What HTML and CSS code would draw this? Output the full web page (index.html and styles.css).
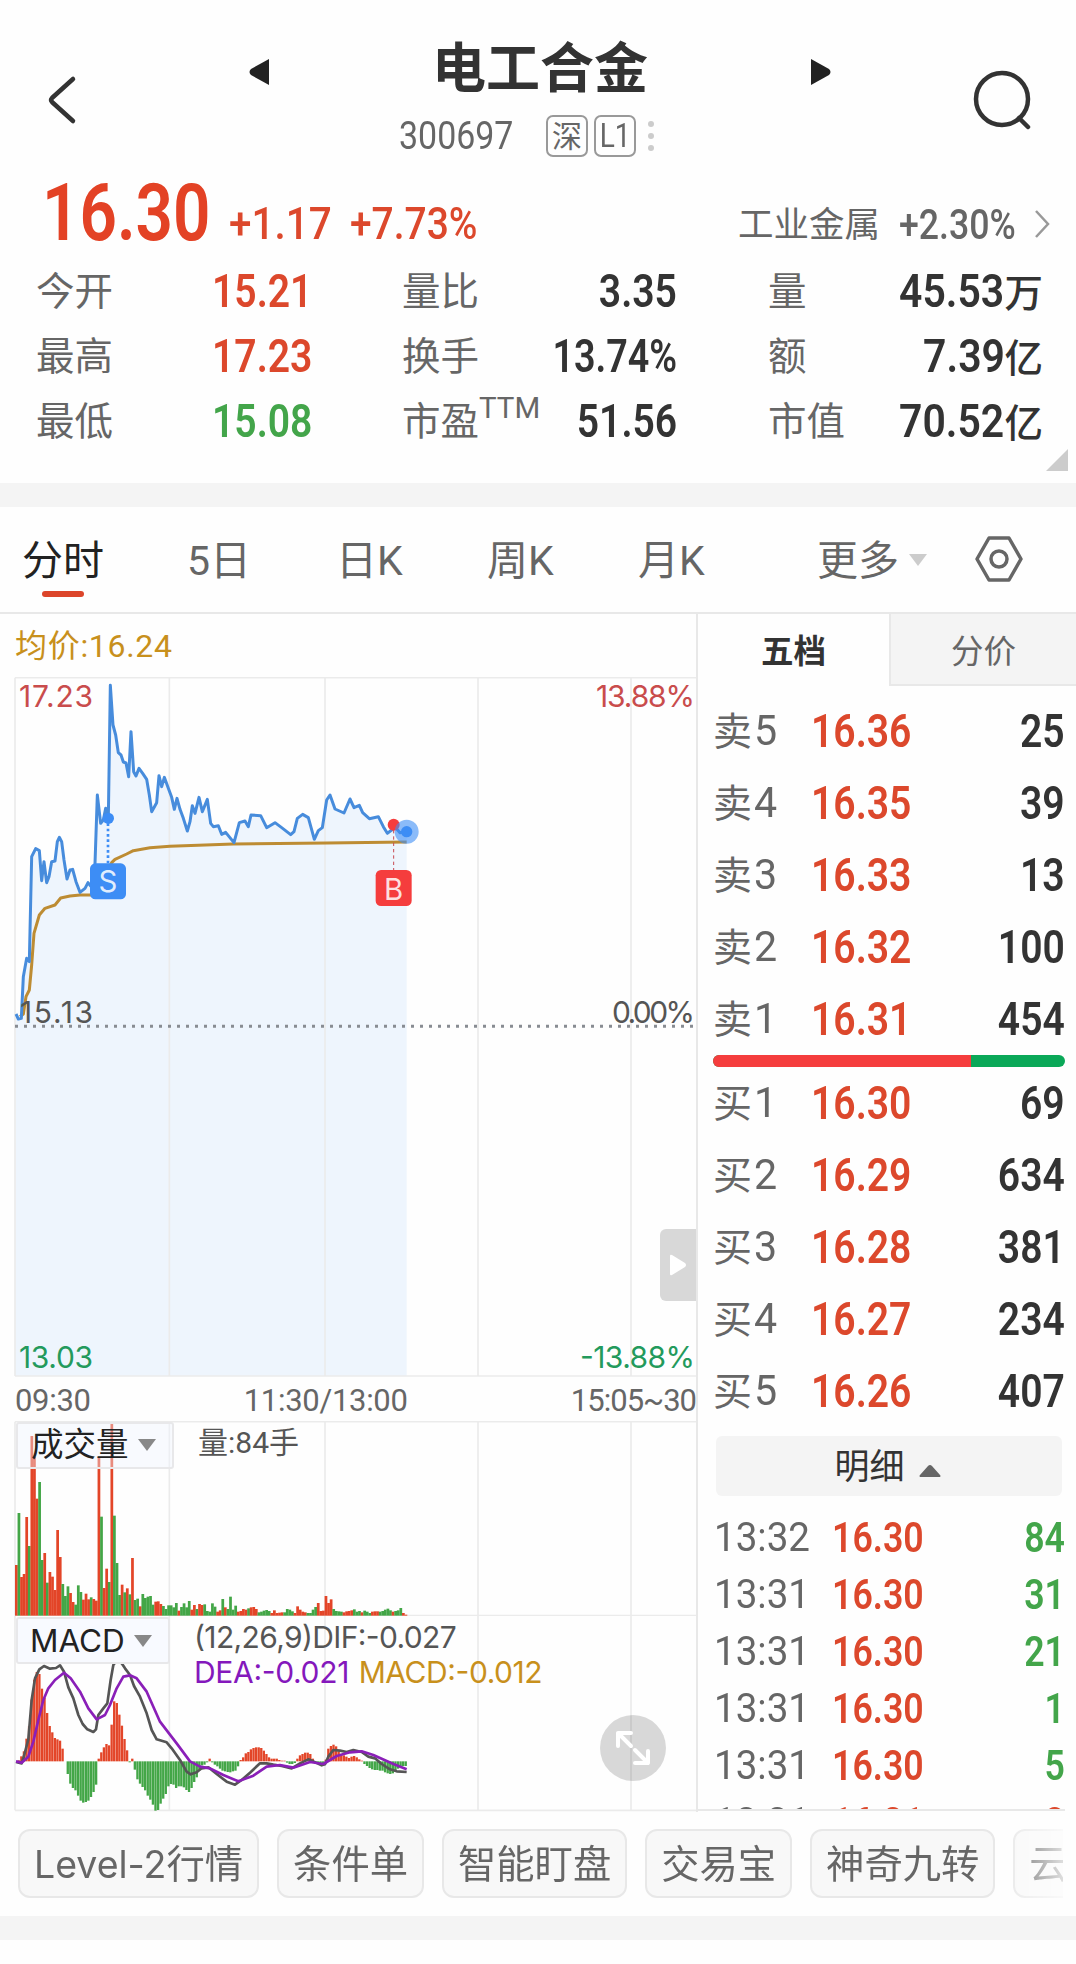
FILE: index.html
```html
<!DOCTYPE html>
<html lang="zh-CN">
<head>
    <meta charset="UTF-8">
    <meta name="viewport" content="width=device-width, initial-scale=1.0">
    <title>电工合金 300697</title>
    <link rel="stylesheet" href="styles.css">
</head>
<body>
    <header class="header">
        <svg class="back" viewBox="0 0 32 52" width="32" height="52"><path d="M27 5 L6 24 Q4 26 6 28 L27 47" /></svg>
        <svg class="prev" viewBox="0 0 22 28" width="22" height="28"><path d="M21 1 V27 L3 17 Q0 14 3 11 Z" /></svg>
        <div class="title">
            <h1>电工合金</h1>
            <div class="code">
                <span class="num code-num">300697</span>
                <span class="tag">深</span>
                <span class="tag"><span class="num">L1</span></span>
                <span class="dots"><i></i><i></i><i></i></span>
            </div>
        </div>
        <svg class="next" viewBox="0 0 22 28" width="22" height="28"><path d="M1 1 V27 L19 17 Q22 14 19 11 Z" /></svg>
        <svg class="search" viewBox="0 0 60 62" width="60" height="62"><circle cx="29" cy="30" r="26" /><path d="M46 49 L55 58" /></svg>
    </header>

    <section class="quote">
        <div class="price-row">
            <span class="num price">16.30</span>
            <span class="num change">+1.17</span>
            <span class="num change percent">+7.73%</span>
            <span class="sector">工业金属</span>
            <span class="num sector-change">+2.30%</span>
            <svg class="more" viewBox="0 0 18 30" width="18" height="30"><path d="M3 2 L15 15 L3 28" /></svg>
        </div>
        <div class="stats">
            <div class="stat"><span>今开</span><b class="num up">15.21</b></div>
            <div class="stat"><span>量比</span><b class="num">3.35</b></div>
            <div class="stat"><span>量</span><b><b class="num">45.53</b>万</b></div>
            <div class="stat"><span>最高</span><b class="num up">17.23</b></div>
            <div class="stat"><span>换手</span><b class="num pct">13.74%</b></div>
            <div class="stat"><span>额</span><b><b class="num">7.39</b>亿</b></div>
            <div class="stat"><span>最低</span><b class="num down">15.08</b></div>
            <div class="stat"><span>市盈<sup>TTM</sup></span><b class="num">51.56</b></div>
            <div class="stat"><span>市值</span><b><b class="num">70.52</b>亿</b></div>
        </div>
        <div class="corner"></div>
    </section>

    <nav class="tabs">
        <span class="tab active">分时</span>
        <span class="tab tab-5d">5日</span>
        <span class="tab tab-day">日K</span>
        <span class="tab tab-week">周K</span>
        <span class="tab tab-month">月K</span>
        <span class="tab tab-more">更多<i class="caret"></i></span>
        <svg class="settings" viewBox="0 0 48 46" width="48" height="46"><path d="M14 2 H34 L46 23 L34 44 H14 L2 23 Z" /><circle cx="24" cy="23" r="8" /></svg>
    </nav>

    <main class="main">
        <section class="charts">
            <div class="avg">均价:16.24</div>

            <div class="plot">
                <svg viewBox="0 51 2088 2100" width="696" height="700">
                    <path class="area" id="area" />
                    <path class="grid" d="M45 53 H2088 M45 2148 H2088 M45 53 V2148 M508 53 V2148 M975 53 V2148 M1434 53 V2148 M1893 53 V2148" />
                    <path class="zero" d="M45 1099 H2088" />
                    <polyline class="avg-line" points="60,1070 70,1062 78,1010 88,990 95,915 102,820 118,765 135,745 165,735 182,714 210,708 240,705 272,705 320,640 335,608 345,598 380,582 400,572 450,563 510,559 700,552 980,549 1220,546" />
                    <polyline class="price-line" id="priceLine" points="48,1062 55,1077 64,1075 70,950 80,895 88,905 95,590 107,566 118,572 125,662 132,605 140,668 147,650 155,605 165,603 172,545 178,532 185,545 192,600 201,657 210,630 218,628 228,665 240,697 255,685 264,668 272,678 284,640 292,405 302,490 310,480 317,445 325,475 331,76 339,195 347,225 355,278 363,285 370,306 378,309 386,350 393,215 401,335 408,348 417,325 428,340 440,358 448,405 455,455 470,428 477,347 485,380 493,352 505,385 515,412 523,448 531,415 540,448 550,475 562,513 570,485 577,437 585,460 597,412 607,455 622,418 632,490 640,500 655,497 665,523 677,517 702,548 718,488 735,483 745,500 753,465 782,467 800,503 825,488 845,503 872,524 882,515 892,475 908,463 925,473 943,538 955,512 967,503 980,420 990,405 1005,447 1032,459 1050,417 1062,443 1078,436 1088,458 1108,476 1135,470 1150,500 1162,520 1175,510 1180,495 1200,518 1220,515" />

                    <!-- sell / buy markers -->
                    <path class="sell-stem" d="M324 490 V612" />
                    <circle class="sell" cx="325" cy="475" r="17" />
                    <rect class="sell" x="270" y="610" width="108" height="108" rx="16" />
                    <text class="mark" x="324" y="697">S</text>
                    <path class="buy-stem" d="M1181 510 V630" />
                    <circle class="buy" cx="1181" cy="494" r="18" />
                    <rect class="buy" x="1127" y="630" width="108" height="108" rx="16" />
                    <text class="mark" x="1181" y="719">B</text>
                    <circle class="halo" cx="1220" cy="515" r="36" />
                    <circle class="sell" cx="1220" cy="515" r="17" />

                    <text class="label high" x="57" y="140" textLength="222">17.23</text>
                    <text class="label high" x="1788" y="140" textLength="297">13.88%</text>
                    <text class="label" x="60" y="1088" textLength="219">15.13</text>
                    <text class="label" x="1836" y="1088" textLength="249">0.00%</text>
                    <text class="label low" x="57" y="2124" textLength="222">13.03</text>
                    <text class="label low" x="1740" y="2124" textLength="345">-13.88%</text>
                </svg>
                <div class="expand-side"><svg viewBox="0 0 18 22" width="18" height="22"><path d="M1 2 Q1 0 3 1 L16 9 Q18 11 16 13 L3 21 Q1 22 1 20 Z" /></svg></div>
            </div>

            <div class="times"><span>09:30</span><span class="noon">11:30/13:00</span><span class="close">15:05~30</span></div>

            <div class="plot">
                <svg viewBox="0 63 2088 585" width="696" height="195">
                    <path class="grid" d="M45 65 H2088 M45 647 H2088 M45 65 V647 M508 65 V647 M975 65 V647 M1434 65 V647 M1893 65 V647" />
                    <g id="volume"></g>
                </svg>
                <div class="chip chip-volume">成交量<i class="caret"></i></div>
                <div class="legend">量:84手</div>
            </div>

            <div class="plot">
                <svg viewBox="0 48 2088 588" width="696" height="196">
                    <path class="grid" d="M45 631 H2088 M45 48 V631 M508 48 V631 M975 48 V631 M1434 48 V631 M1893 48 V631" />
                    <g id="macd"></g>
                    <polyline class="dif" points="48,486 65,490 72,468 85,418 95,300 105,235 118,208 132,198 150,206 168,204 180,196 192,215 205,262 220,295 235,345 248,372 262,388 280,396 288,388 295,345 310,325 322,310 332,240 340,195 350,182 365,190 375,205 390,225 402,258 420,290 440,340 455,390 470,418 500,427 515,445 540,480 560,515 572,523 590,517 605,505 625,502 650,522 680,545 705,554 725,540 750,518 780,490 800,490 820,494 845,498 875,505 900,490 925,478 940,484 965,496 975,493 985,470 1000,450 1020,452 1040,456 1060,450 1085,456 1105,470 1125,475 1145,492 1170,508 1190,514 1220,516" />
                    <polyline class="dea" points="48,484 65,488 85,470 100,425 115,360 130,300 145,265 165,240 192,218 212,235 240,275 265,325 290,358 315,345 330,315 350,265 370,230 390,226 410,235 440,275 480,365 530,430 570,484 600,500 630,505 670,525 715,544 760,527 800,500 840,495 880,503 930,486 970,492 1010,468 1050,457 1085,454 1120,465 1180,492 1220,508" />
                    <text class="label" x="582" y="144" textLength="788">(12,26,9)DIF:-0.027</text>
                    <text class="label purple" x="582" y="248" textLength="466">DEA:-0.021</text>
                    <text class="label gold" x="1076" y="248" textLength="552">MACD:-0.012</text>
                </svg>
                <div class="chip chip-macd">MACD<i class="caret"></i></div>
                <div class="fullscreen"><svg viewBox="0 0 66 66" width="66" height="66"><path d="M31 31 L18 18 M18 31 V18 H31 M35 35 L48 48 M48 36 V48 H35" /></svg></div>
            </div>
        </section>

        <aside class="book">
            <div class="book-tabs"><span class="on">五档</span><span class="off">分价</span></div>
            <div class="levels" id="sells"></div>
            <div class="ratio"><i></i></div>
            <div class="levels" id="buys"></div>
            <div class="detail">明细<svg viewBox="0 0 22 12" width="22" height="12"><path d="M1 12 Q0 11 1 10 L9 1 Q11 -1 13 1 L21 10 Q22 11 21 12 Z" /></svg></div>
            <div class="ticks" id="ticks"></div>
        </aside>
    </main>

    <div class="tools">
        <span class="tool"><span class="latin">Level-2</span>行情</span>
        <span class="tool">条件单</span>
        <span class="tool">智能盯盘</span>
        <span class="tool">交易宝</span>
        <span class="tool">神奇九转</span>
        <span class="tool">云参数</span>
    </div>
    <div class="band"></div>

    <script>
        // Order book, [label, level, price, amount]
        const sells = [
            ['卖', 5, '16.36', 25], ['卖', 4, '16.35', 39], ['卖', 3, '16.33', 13],
            ['卖', 2, '16.32', 100], ['卖', 1, '16.31', 454]
        ];
        const buys = [
            ['买', 1, '16.30', 69], ['买', 2, '16.29', 634], ['买', 3, '16.28', 381],
            ['买', 4, '16.27', 234], ['买', 5, '16.26', 407]
        ];
        // Latest trades
        const ticks = [
            ['13:32', '16.30', 84, 'down'], ['13:31', '16.30', 31, 'down'], ['13:31', '16.30', 21, 'down'],
            ['13:31', '16.30', 1, 'down'], ['13:31', '16.30', 5, 'down'], ['13:31', '16.31', 8, 'up']
        ];

        function levelRow(row) {
            return `<div class="level"><span class="side">${row[0]}<span class="num">${row[1]}</span></span>` +
                `<b class="num up">${row[2]}</b><b class="num amount">${row[3]}</b></div>`;
        }
        document.getElementById('sells').innerHTML = sells.map(levelRow).join('');
        document.getElementById('buys').innerHTML = buys.map(levelRow).join('');
        document.getElementById('ticks').innerHTML = ticks.map(t =>
            `<div class="tick"><span class="num">${t[0]}</span><b class="num up">${t[1]}</b><b class="num amount ${t[3]}">${t[2]}</b></div>`
        ).join('');

        // Shade everything under the price line
        const line = document.getElementById('priceLine').getAttribute('points');
        document.getElementById('area').setAttribute('d', `M45 2148 L${line} L1220 2148 Z`);

        const step = 7.74;
        function bar(i, y, h, cls, w) {
            return `<rect class="${cls}" x="${(45 + i * step).toFixed(1)}" y="${y}" width="${w}" height="${h}"/>`;
        }

        // Volume per minute, r = up, g = down
        const volume = ('r152 g308 r116 r125 r296 g209 r539 r477 r351 g401 g167 r188 g99 r131 r117 r77 r257 r176 g95 g59 ' +
            'g88 r68 r41 g33 g91 g71 r48 r66 r49 g55 r50 r45 r476 g297 r83 r141 g101 r578 g300 g158 ' +
            'g62 r93 g70 r82 g64 r173 g47 g51 r28 g65 g53 g57 g59 g33 r42 r43 r35 g29 g20 g31 ' +
            'g31 g25 g38 r15 g26 g37 g25 g44 r18 r32 g20 r35 r32 g34 g14 g12 g37 g27 r12 r16 ' +
            'g50 r25 g20 g57 g18 g30 r12 r14 r20 r18 g22 r25 r26 r20 g10 g12 g15 g17 g14 r8 ' +
            'r16 r8 r9 r10 g10 g20 g18 g13 r8 r28 r18 r12 r10 g8 g8 g18 g26 r38 r14 r15 ' +
            'r59 r38 r49 g20 g14 g13 g12 r10 r13 r14 r16 g19 g12 g14 r10 g15 g12 g8 r12 r13 ' +
            'r13 g12 g14 g18 g21 g16 r12 g14 g16 g23 r8 r3').split(' ');
        document.getElementById('volume').innerHTML = volume.map((v, i) => {
            const h = Number(v.slice(1));
            return bar(i, 647 - h, h, v[0] === 'r' ? 'bar-up' : 'bar-down', 8.2);
        }).join('');

        const macd = [0, 3, 15, 30, 68, 105, 185, 245, 268, 262, 218, 190, 145, 106, 87, 70, 66, 62, 38, 0,
            -38, -67, -80, -87, -103, -118, -124, -122, -118, -107, -92, -70, 8, 27, 42, 52, 48, 110, 180, 175,
            140, 107, 67, 33, -3, 8, -25, -54, -67, -77, -87, -103, -115, -130, -148, -146, -127, -112, -98, -75,
            -68, -70, -80, -75, -75, -78, -86, -92, -80, -62, -48, -25, -12, -10, -3, 8, -3, -10, -15, -22,
            -28, -30, -32, -33, -30, -28, -15, 4, 12, 24, 28, 36, 40, 42, 42, 40, 32, 22, 12, 8,
            8, 8, 4, 2, 2, -4, -8, -8, -5, 8, 18, 22, 26, 26, 22, 8, -2, -6, -10, -6,
            5, 38, 46, 50, 45, 30, 20, 18, 14, 10, 14, 16, 12, 6, 2, -8, -14, -20, -24, -26,
            -26, -28, -28, -33, -36, -38, -36, -30, -22, -18, -14, -14];
        document.getElementById('macd').innerHTML = macd.map((v, i) =>
            bar(i, v > 0 ? 484 - v : 484, Math.abs(v), v > 0 ? 'bar-up' : 'bar-down', 7)
        ).join('');
    </script>
</body>
</html>
```
FILE: styles.css
```css
* {
    box-sizing: border-box;
}
body {
    margin: 0;
    width: 1076px;
    height: 1964px;
    overflow: hidden;
    background-color: #fefefe;
    color: #333;
    font-family: Roboto, "Noto Sans CJK SC", sans-serif;
}
svg {
    display: block;
}
/* Narrow figures */
.num {
    display: inline-block;
    font-family: Roboto, sans-serif;
    transform: scaleX(.85);
    transform-origin: right center;
    white-space: nowrap;
}
.up {
    color: #dc482c;
}
.down {
    color: #43a54a;
}

/* Header */
.header {
    display: flex;
    height: 166px;
    padding-top: 36px;
}
.header svg {
    flex: none;
    fill: none;
    stroke: #333;
    stroke-width: 4.5;
    stroke-linecap: round;
}
.header .back {
    margin: 38px 0 0 46px;
}
.header .prev,
.header .next {
    fill: #222;
    stroke: none;
    margin-top: 22px;
}
.header .prev {
    margin-left: 170px;
}
.header .search {
    margin: 33px 0 0 141px;
}
.title {
    width: 540px;
}
.title h1 {
    margin: 0;
    padding-top: 3px;
    text-align: center;
    font-size: 54px;
    line-height: 62px;
    font-weight: 700;
}
.code {
    display: flex;
    align-items: center;
    height: 42px;
    margin-top: 14px;
    padding-left: 129px;
    color: #666;
}
.code-num {
    width: 147px;
    font-size: 39px;
    transform: scaleX(.87);
    transform-origin: left center;
}
.tag {
    width: 42px;
    height: 42px;
    margin-right: 6px;
    border: 2px solid #999;
    border-radius: 7px;
    text-align: center;
    font-size: 30px;
    line-height: 39px;
}
.tag .num {
    font-size: 33px;
    line-height: 37px;
    transform-origin: center;
}
.dots {
    display: flex;
    flex-direction: column;
    gap: 6px;
    margin-left: 6px;
}
.dots i {
    width: 6px;
    height: 6px;
    border-radius: 50%;
    background-color: #ccc;
}

/* Quote */
.quote {
    position: relative;
    height: 317px;
}
.price-row {
    display: flex;
    align-items: flex-end;
    height: 91px;
    padding-left: 42px;
    line-height: 1;
}
.price-row .num {
    transform-origin: left center;
}
.price-row .price {
    width: 187px;
    font-size: 80px;
    font-weight: 600;
    line-height: 88px;
    color: #e34225;
    transform: scaleX(.82);
}
.price-row .change {
    width: 121px;
    font-size: 44px;
    font-weight: 500;
    line-height: 65px;
    color: #dc482c;
    transform: scaleX(.92);
}
.price-row .percent {
    width: 388px;
    transform: scaleX(.885);
}
.sector {
    width: 161px;
    font-size: 35.5px;
    line-height: 63px;
    color: #666;
}
.price-row .sector-change {
    width: 134px;
    font-size: 42px;
    line-height: 65px;
    font-weight: 500;
    color: #666;
}
.more {
    flex: none;
    margin-bottom: 18px;
    fill: none;
    stroke: #999;
    stroke-width: 2.5;
}
.stats {
    display: grid;
    grid-template-columns: 275px 275px 275px;
    column-gap: 91px;
    padding: 2px 0 0 36px;
}
.stat {
    display: flex;
    justify-content: space-between;
    height: 65px;
    line-height: 65px;
    font-size: 38.5px;
    color: #666;
}
.stat b {
    font-weight: 500;
    color: #333;
}
.stat .num {
    font-size: 46px;
    font-weight: 600;
}
.stat .pct {
    transform: scaleX(.82);
}
.stat b .num {
    transform: scaleX(.89);
}
.stat .up {
    color: #dc482c;
}
.stat .down {
    color: #43a54a;
}
.stat sup {
    font-size: 29.5px;
    line-height: 0;
    vertical-align: 17px;
}
.corner {
    position: absolute;
    right: 8px;
    bottom: 12px;
    border-left: 22px solid transparent;
    border-bottom: 22px solid #ccc;
}
.stat:nth-child(3n+1) .num {
    width: 99px;
    transform-origin: left center;
}

/* Period tabs */
.tabs {
    display: flex;
    align-items: flex-start;
    height: 131px;
    padding: 25px 0 0 22px;
    border-top: 24px solid #f4f4f4;
    border-bottom: 2px solid #e8e8e8;
    font-size: 41px;
    line-height: 58px;
    color: #666;
    white-space: nowrap;
}
.tab {
    width: 151px;
}
.active {
    position: relative;
    width: 165px;
    color: #222;
}
.active::after {
    content: "";
    position: absolute;
    left: 20px;
    top: 59px;
    width: 42px;
    height: 6px;
    border-radius: 3px;
    background-color: #dc452a;
}
.tab-5d {
    width: 149px;
}
.tab-month {
    width: 179px;
}
.tab-more {
    display: flex;
    align-items: center;
    width: 158px;
}
.caret {
    display: inline-block;
    border: 9px solid transparent;
    border-top: 12px solid #888;
    border-bottom: 0;
}
.tab-more .caret {
    margin: -3px 0 0 10px;
    border-top-color: #ccc;
}
.settings {
    margin-top: 4px;
    fill: none;
    stroke: #666;
    stroke-width: 3.5;
    stroke-linejoin: round;
}

/* Charts */
.main {
    display: flex;
    height: 1198px;
}
.charts {
    width: 698px;
    border-right: 2px solid #e8e8e8;
}
.avg {
    height: 63px;
    padding-left: 15px;
    font-size: 32px;
    line-height: 65px;
    letter-spacing: .7px;
    color: #c8901c;
}
.plot {
    position: relative;
}
.plot svg text {
    font-family: Inter, sans-serif;
}
.grid {
    fill: none;
    stroke: #ebebeb;
    stroke-width: 5;
}
.area {
    fill: #eef5fd;
}
.zero {
    stroke: #888c92;
    stroke-width: 9;
    stroke-dasharray: 9 18;
}
.price-line,
.avg-line,
.dif,
.dea {
    fill: none;
    stroke-width: 8;
    stroke-linejoin: round;
}
.price-line,
.avg-line {
    stroke-width: 9;
}
.price-line {
    stroke: #478cdc;
}
.avg-line {
    stroke: #bd8c33;
}
.sell {
    fill: #3d8df5;
}
.buy {
    fill: #f53d3d;
}
.halo {
    fill: #3d8df5;
    opacity: .6;
}
.sell-stem {
    stroke: #3d8df5;
    stroke-width: 8;
    stroke-dasharray: 8 8;
}
.buy-stem {
    stroke: #c84a52;
    stroke-width: 3;
    stroke-dasharray: 10 9;
}
.mark {
    fill: #fff;
    fill-opacity: .85;
    font-size: 88px;
    text-anchor: middle;
}
.label {
    fill: #555;
    font-size: 90px;
}
.high {
    fill: #c94c4c;
}
.low {
    fill: #239a5c;
}
.purple {
    fill: #8418bc;
}
.gold {
    fill: #c8901c;
}
.dif {
    stroke: #555;
}
.dea {
    stroke: #8a1fb8;
}
.bar-up {
    fill: #e34528;
}
.bar-down {
    fill: #43a647;
}
.expand-side {
    position: absolute;
    right: 0;
    top: 552px;
    width: 36px;
    height: 72px;
    padding: 25px 0 0 9px;
    border-radius: 6px 0 0 6px;
    background-color: #d8d8d8;
}
.expand-side path {
    fill: #fff;
}
.times {
    display: flex;
    height: 44px;
    padding-left: 15px;
    font-size: 31px;
    line-height: 48px;
    letter-spacing: -.3px;
    color: #666;
}
.noon {
    margin-left: 153px;
}
.close {
    margin-left: auto;
    letter-spacing: -1px;
}
.chip {
    position: absolute;
    left: 16px;
    top: 1px;
    display: flex;
    align-items: center;
    justify-content: space-between;
    height: 47px;
    padding: 0 16px 0 13px;
    border: 2px solid #e8e8ea;
    border-radius: 3px;
    background-color: rgba(240, 245, 255, .4);
    font-size: 32.5px;
    line-height: 38px;
    color: #222;
}
.chip-volume {
    width: 158px;
    padding-bottom: 1px;
}
.chip-macd {
    width: 154px;
    padding-left: 12px;
    background-color: #f8faff;
    font-family: Inter, sans-serif;
    font-size: 31.5px;
}
.legend {
    position: absolute;
    left: 198px;
    top: 0;
    font-size: 30px;
    line-height: 44px;
    color: #555;
}
.fullscreen {
    position: absolute;
    left: 600px;
    top: 99px;
    width: 66px;
    height: 66px;
    border-radius: 50%;
    background-color: rgba(0, 0, 0, .15);
}
.fullscreen path {
    fill: none;
    stroke: #fff;
    stroke-width: 4;
    stroke-linecap: round;
    stroke-linejoin: round;
}

/* Order book */
.book {
    width: 378px;
}
.book-tabs {
    display: flex;
    height: 72px;
    text-align: center;
    font-size: 32.5px;
    line-height: 76px;
}
.on {
    width: 191px;
    font-weight: 700;
}
.off {
    flex: 1;
    border: 2px solid #e8e8e8;
    border-width: 0 0 2px 2px;
    background-color: #f4f4f4;
    color: #666;
}
.levels {
    padding: 0 11px 0 15px;
}
.level {
    display: flex;
    height: 72px;
    line-height: 72px;
    font-size: 46px;
    font-weight: 600;
}
.level b,
.tick b {
    font-weight: 600;
}
.side {
    width: 98px;
    font-size: 39px;
    font-weight: 400;
    color: #666;
}
.side .num {
    margin-left: 2px;
    font-size: 42px;
    transform: scaleX(.98);
    transform-origin: left center;
}
.level .up,
.tick .up:not(.amount) {
    transform-origin: left center;
}
#sells {
    padding-top: 9px;
}
.amount {
    margin-left: auto;
}
.ratio {
    height: 12px;
    margin: 0 11px 0 15px;
    border-radius: 6px;
    overflow: hidden;
    background-color: #0aa858;
}
.ratio i {
    display: block;
    width: 258px;
    height: 12px;
    background-color: #f53d3d;
}
.detail {
    display: flex;
    align-items: center;
    justify-content: center;
    gap: 14px;
    height: 60px;
    margin: 9px 14px 0 18px;
    padding: 4px 3px 0 0;
    border-radius: 6px;
    background-color: #f4f4f4;
    font-size: 35px;
    line-height: 60px;
}
.detail svg {
    margin-top: 5px;
    fill: #666;
}
.ticks {
    height: 315px;
    margin-right: 11px;
    padding: 13px 0 0 16px;
    overflow: hidden;
    border-bottom: 2px solid #e8e8e8;
}
.tick {
    display: flex;
    height: 57px;
    line-height: 57px;
    font-size: 42px;
}
.tick > span {
    width: 118px;
    font-size: 41px;
    color: #666;
    transform: scaleX(.94);
    transform-origin: left center;
}

/* Tool buttons */
.tools {
    display: flex;
    gap: 18px;
    height: 104px;
    margin-right: 13px;
    padding: 17px 0 0 18px;
    overflow: hidden;
    -webkit-mask-image: linear-gradient(to right, #000 1000px, transparent 1080px);
    mask-image: linear-gradient(to right, #000 1000px, transparent 1080px);
}
.tool {
    flex: none;
    height: 69px;
    padding: 0 14px;
    border: 2px solid #e8e8e8;
    border-radius: 12px;
    background-color: #f8f8f8;
    font-size: 38.3px;
    line-height: 68px;
    color: #666;
    white-space: nowrap;
}
.latin {
    font-family: Inter, sans-serif;
    font-size: 37.5px;
}
.band {
    height: 24px;
    background-color: #f4f4f4;
}
```
